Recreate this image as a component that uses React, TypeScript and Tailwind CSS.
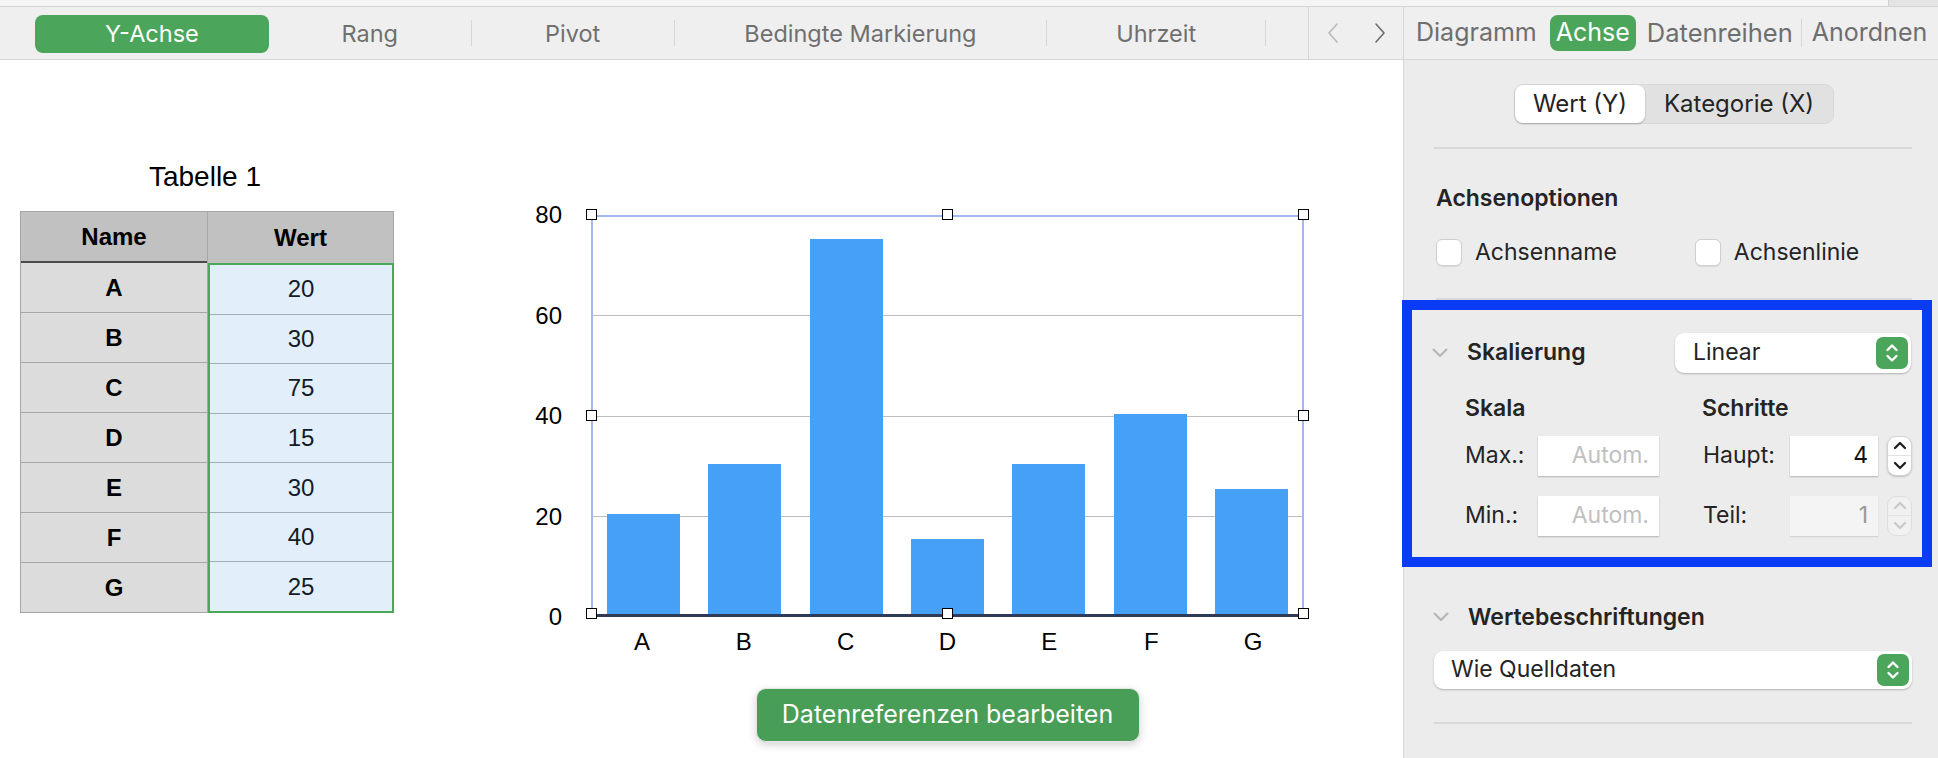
import React from "react";

const rows = [
  { n: "A", v: 20 },
  { n: "B", v: 30 },
  { n: "C", v: 75 },
  { n: "D", v: 15 },
  { n: "E", v: 30 },
  { n: "F", v: 40 },
  { n: "G", v: 25 },
];

function Disclosure() {
  return (
    <svg width="16" height="10" viewBox="0 0 16 10" className="shrink-0">
      <polyline points="1.5,1.5 8,8 14.5,1.5" fill="none" stroke="#b4b4b4" strokeWidth="2" strokeLinecap="round" strokeLinejoin="round" />
    </svg>
  );
}

function GreenStepper() {
  return (
    <div className="w-[32px] h-[32px] rounded-[7px] bg-[#4ba55b] flex items-center justify-center shrink-0">
      <svg width="32" height="32" viewBox="0 0 32 32">
        <polyline points="11.5,13 16,8.5 20.5,13" fill="none" stroke="white" strokeWidth="2.4" strokeLinecap="round" strokeLinejoin="round" />
        <polyline points="11.5,19 16,23.5 20.5,19" fill="none" stroke="white" strokeWidth="2.4" strokeLinecap="round" strokeLinejoin="round" />
      </svg>
    </div>
  );
}

function NumStepper({ disabled }: { disabled?: boolean }) {
  const c = disabled ? "#c9c9c9" : "#1f1f1f";
  return (
    <div className={`w-[25px] h-[40px] rounded-[9px] border flex flex-col ${disabled ? "bg-[#f1f1f1] border-[#dedede]" : "bg-white border-[#d2d2d2] shadow-[0_1px_2px_rgba(0,0,0,0.2)]"}`}>
      <div className="flex-1 flex items-center justify-center border-b border-[#e2e2e2]">
        <svg width="14" height="9" viewBox="0 0 14 9">
          <polyline points="2,7 7,2 12,7" fill="none" stroke={c} strokeWidth="2.3" strokeLinecap="round" strokeLinejoin="round" />
        </svg>
      </div>
      <div className="flex-1 flex items-center justify-center">
        <svg width="14" height="9" viewBox="0 0 14 9">
          <polyline points="2,2 7,7 12,2" fill="none" stroke={c} strokeWidth="2.3" strokeLinecap="round" strokeLinejoin="round" />
        </svg>
      </div>
    </div>
  );
}

function Checkbox() {
  return <div className="w-[26px] h-[27px] rounded-[6px] bg-white border border-[#cfcfcf] shadow-[0_1px_1px_rgba(0,0,0,0.08)] shrink-0" />;
}

function Toolbar() {
  const sep = <div className="w-px h-[26px] bg-[#d6d6d6] shrink-0" />;
  return (
    <div className="w-[1403px] shrink-0 flex items-center pl-[35px] text-[23.5px] text-[#6f6f6f]">
      <div className="w-[234px] h-[38px] mt-[2px] rounded-[8px] bg-[#4ba55b] text-white flex items-center justify-center">Y-Achse</div>
      <div className="w-[202px] text-center mt-[2px]">Rang</div>
      {sep}
      <div className="w-[202px] text-center mt-[2px]">Pivot</div>
      {sep}
      <div className="w-[372px] text-center mt-[2px]">Bedingte Markierung</div>
      {sep}
      <div className="w-[218px] text-center mt-[2px]">Uhrzeit</div>
      {sep}
      <div className="w-[42px]" />
      <div className="w-px self-stretch bg-[#d6d6d6]" />
      <div className="w-[47px] flex justify-center">
        <svg width="14" height="22" viewBox="0 0 14 22">
          <polyline points="11,2 3,11 11,20" fill="none" stroke="#b8b8b8" strokeWidth="1.6" strokeLinecap="round" strokeLinejoin="round" />
        </svg>
      </div>
      <div className="w-[47px] flex justify-center">
        <svg width="14" height="22" viewBox="0 0 14 22">
          <polyline points="3,2 11,11 3,20" fill="none" stroke="#6c6c6c" strokeWidth="1.6" strokeLinecap="round" strokeLinejoin="round" />
        </svg>
      </div>
    </div>
  );
}

function SidebarTabs() {
  return (
    <div className="flex-1 border-l border-[#d6d6d6] flex items-center pl-[12px] text-[25px] text-[#6e6e6e]">
      <div>Diagramm</div>
      <div className="ml-[13px] h-[36px] px-[6px] rounded-[8px] bg-[#4ba55b] text-white flex items-center">Achse</div>
      <div className="ml-[11px] text-[25.5px]">Datenreihen</div>
      <div className="ml-[8px] w-px h-[28px] bg-[#d6d6d6]" />
      <div className="ml-[10px]">Anordnen</div>
    </div>
  );
}

function Chart() {
  const handle = "absolute w-[11px] h-[11px] bg-white border border-black z-10";
  return (
    <div className="ml-[108px] mt-[155px] flex flex-col font-['Liberation_Sans',Arial,sans-serif] text-black">
      <div className="flex">
        <div className="w-[60px] h-[402px] flex flex-col justify-between items-end text-[24px]">
          {["80", "60", "40", "20", "0"].map((l) => (
            <div key={l} className="h-0 flex items-center">{l}</div>
          ))}
        </div>
        <div className="ml-[29px] relative w-[713px] h-[402px] border-x-2 border-t-2 border-b-[3px] border-[#a3b8ef] border-b-[#2e3a58] flex items-end">
          <div className="absolute left-0 right-0 top-[98px] h-px bg-[#bdbdbd]" />
          <div className="absolute left-0 right-0 top-[199px] h-px bg-[#bdbdbd]" />
          <div className="absolute left-0 right-0 top-[299px] h-px bg-[#bdbdbd]" />
          {rows.map((r) => (
            <div key={r.n} className="flex-1 flex justify-center items-end">
              <div className="relative w-[73px] bg-[#46a1f6]" style={{ height: r.v * 5 }} />
            </div>
          ))}
          <div className={`${handle} left-[-7px] top-[-8px]`} />
          <div className={`${handle} left-[349px] top-[-8px]`} />
          <div className={`${handle} left-[705px] top-[-8px]`} />
          <div className={`${handle} left-[-7px] top-[193px]`} />
          <div className={`${handle} left-[705px] top-[193px]`} />
          <div className={`${handle} left-[-7px] top-[391px]`} />
          <div className={`${handle} left-[349px] top-[391px]`} />
          <div className={`${handle} left-[705px] top-[391px]`} />
        </div>
      </div>
      <div className="ml-[89px] w-[713px] flex mt-[13px] text-[24px] leading-[24px]">
        {rows.map((r) => (
          <div key={r.n} className="flex-1 text-center">{r.n}</div>
        ))}
      </div>
      <div className="ml-[89px] w-[713px] flex justify-center mt-[34px] font-['Inter',sans-serif]">
        <div className="w-[384px] h-[54px] rounded-[10px] bg-[#489d57] border border-[#e6e6e6] shadow-[0_3px_8px_rgba(0,0,0,0.18)] text-white text-[25px] flex items-center justify-center">
          Datenreferenzen bearbeiten
        </div>
      </div>
    </div>
  );
}

function Table() {
  return (
    <div className="pt-[100px] flex flex-col items-center font-['Liberation_Sans',Arial,sans-serif] text-black">
      <div className="text-[28px] leading-[34px] -ml-[4px]">Tabelle 1</div>
      <div className="mt-[17px] flex text-[24px]">
        <div className="w-[188px] flex flex-col border-l border-t border-r border-[#a6a6a6]">
          <div className="h-[51px] bg-[#c0c1c0] border-b-2 border-[#4a4a4a] flex items-center justify-center font-bold">Name</div>
          {rows.map((r) => (
            <div key={r.n} className="h-[50px] bg-[#dcdcdc] border-b border-[#a6a6a6] flex items-center justify-center font-bold">{r.n}</div>
          ))}
        </div>
        <div className="w-[186px] flex flex-col">
          <div className="h-[52px] bg-[#c0c1c0] border-t border-r border-[#a6a6a6] flex items-center justify-center font-bold">Wert</div>
          <div className="h-[350px] border-2 border-[#4ca75b] bg-[#e2effb] flex flex-col">
            {rows.map((r, i) => (
              <div key={r.n} className={`flex-1 flex items-center justify-center text-[#151b26] ${i < 6 ? "border-b border-[#a3abb6]" : ""}`}>{r.v}</div>
            ))}
          </div>
        </div>
      </div>
    </div>
  );
}

function Panel() {
  const input = "bg-white h-[40px] shadow-[0_1px_1.5px_rgba(0,0,0,0.25)] flex items-center justify-end pr-[10px]";
  return (
    <div className="flex-1 bg-[#ececec] border-l border-[#d6d6d6] flex flex-col text-[#242424] text-[23px]">
      <div className="mt-[24px] flex justify-center pl-[6px] text-[24px]">
        <div className="h-[40px] rounded-[9px] bg-[#e1e1e1] border border-[#d8d8d8] flex items-center">
          <div className="w-[130px] h-[38px] rounded-[8px] bg-white shadow-[0_1px_2px_rgba(0,0,0,0.25)] flex items-center justify-center">Wert (Y)</div>
          <div className="w-[188px] flex items-center justify-center">Kategorie (X)</div>
        </div>
      </div>
      <div className="ml-[30px] w-[478px] h-[2px] bg-[#d8d8d8] mt-[23px]" />
      <div className="ml-[32px] mt-[35px] leading-[28px] font-semibold">Achsenoptionen</div>
      <div className="ml-[32px] mt-[23px] flex items-center">
        <Checkbox />
        <span className="ml-[13px]">Achsenname</span>
        <div className="ml-[78px]"><Checkbox /></div>
        <span className="ml-[13px]">Achsenlinie</span>
      </div>
      <div className="ml-[32px] w-[476px] h-[2px] bg-[#d8d8d8] mt-[28px]" />
      <div className="ml-[-2px] w-[530px] border-[10px] border-[#0a3cf5] pt-[23px] pb-[21px]">
        <div className="flex items-center h-[40px]">
          <div className="ml-[20px]"><Disclosure /></div>
          <div className="ml-[19px] font-semibold w-[208px]">Skalierung</div>
          <div className="w-[236px] h-[40px] rounded-[9px] bg-white shadow-[0_1px_2px_rgba(0,0,0,0.25)] flex items-center pl-[18px] pr-[3px]">
            <span className="flex-1">Linear</span>
            <GreenStepper />
          </div>
        </div>
        <div className="mt-[21px] flex leading-[28px] font-semibold">
          <div className="ml-[53px] w-[237px]">Skala</div>
          <div>Schritte</div>
        </div>
        <div className="mt-[14px] flex items-center">
          <div className="ml-[53px] w-[73px]">Max.:</div>
          <div className={`${input} w-[121px] text-[#c0c0c0]`}>Autom.</div>
          <div className="ml-[44px] w-[87px]">Haupt:</div>
          <div className={`${input} w-[88px] text-[#111]`}>4</div>
          <div className="ml-[9px]"><NumStepper /></div>
        </div>
        <div className="mt-[20px] flex items-center">
          <div className="ml-[53px] w-[73px]">Min.:</div>
          <div className={`${input} w-[121px] text-[#c0c0c0]`}>Autom.</div>
          <div className="ml-[44px] w-[87px]">Teil:</div>
          <div className={`${input} w-[88px] !bg-[#f4f4f4] !shadow-[0_1px_1px_rgba(0,0,0,0.1)] text-[#9a9a9a]`}>1</div>
          <div className="ml-[9px]"><NumStepper disabled /></div>
        </div>
      </div>
      <div className="mt-[36px] flex items-center leading-[28px]">
        <div className="ml-[29px]"><Disclosure /></div>
        <div className="ml-[19px] font-semibold">Wertebeschriftungen</div>
      </div>
      <div className="ml-[30px] mt-[20px] w-[478px] h-[38px] rounded-[9px] bg-white shadow-[0_1px_2px_rgba(0,0,0,0.25)] flex items-center pl-[17px] pr-[3px]">
        <span className="flex-1">Wie Quelldaten</span>
        <GreenStepper />
      </div>
      <div className="ml-[30px] w-[478px] h-[2px] bg-[#d8d8d8] mt-[33px]" />
    </div>
  );
}

export default function App() {
  return (
    <div className="w-[1938px] h-[758px] overflow-hidden bg-white flex flex-col font-['Inter',sans-serif]">
      <div className="h-[7px] shrink-0 bg-[#f4f4f4] border-b border-[#d4d4d4] flex justify-end">
        <div className="w-[50px] h-full bg-[#e4e4e4] border-l border-[#cfcfcf]" />
      </div>
      <div className="flex h-[53px] shrink-0 border-b border-[#d6d6d6] bg-[#efefef]">
        <Toolbar />
        <SidebarTabs />
      </div>
      <div className="flex flex-1 min-h-0">
        <div className="w-[1403px] shrink-0 bg-white flex items-start pl-[20px]">
          <Table />
          <Chart />
        </div>
        <Panel />
      </div>
    </div>
  );
}
